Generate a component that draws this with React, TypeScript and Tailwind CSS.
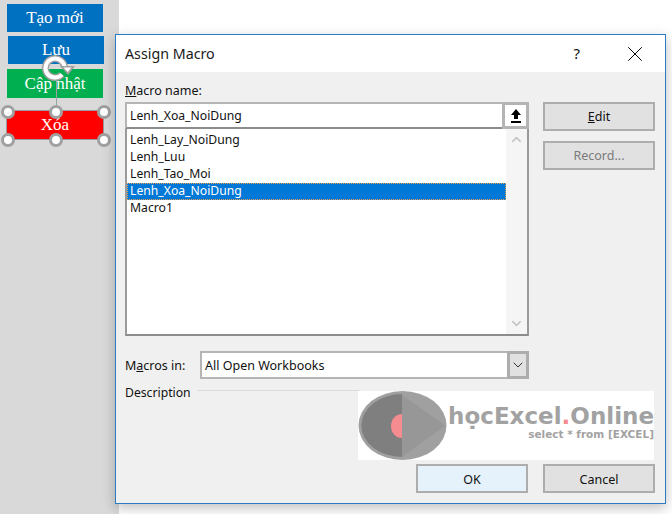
import React from "react";
import { ChevronDown, ChevronUp, X } from "lucide-react";

const macros = ["Lenh_Lay_NoiDung", "Lenh_Luu", "Lenh_Tao_Moi", "Lenh_Xoa_NoiDung", "Macro1"];
const handles = [
  "left-[-6px] top-[-6px]",
  "left-[42px] top-[-6px]",
  "left-[90px] top-[-6px]",
  "left-[-6px] top-[22px]",
  "left-[42px] top-[22px]",
  "left-[90px] top-[22px]",
];

function ShapeButton({ label, className }: { label: string; className: string }) {
  return (
    <div className={`flex h-[28px] w-[96px] items-center justify-center text-[17px] text-white font-['Liberation_Serif',serif] ${className}`}>
      {label}
    </div>
  );
}

function DialogButton({ children, className = "" }: { children: React.ReactNode; className?: string }) {
  return (
    <div className={`flex h-[29px] w-[112px] items-center justify-center border-2 border-[#adadad] bg-[#e1e1e1] pt-[2px] ${className}`}>
      {children}
    </div>
  );
}

function Logo() {
  return (
    <div className="ml-[233px] flex h-[69px] w-[296px] bg-white">
      <svg width="90" height="69" viewBox="0 0 90 69" className="shrink-0">
        <ellipse cx="44.5" cy="34.5" rx="44" ry="34.5" fill="#a0a0a0" />
        <path d="M44 3 A 40 31 0 0 0 44 66 Z" fill="#7f7f7f" />
        <path d="M44 4 L87 34.5 L44 66 Z" fill="#979797" />
        <path d="M44 23 A 11 12 0 0 0 44 47 Z" fill="#f58c90" />
      </svg>
      <div className="ml-[-2px] flex flex-1 flex-col items-end pt-[12px] font-['DejaVu_Sans',sans-serif] font-bold text-[#a2a2a2]">
        <div className="text-[23px] leading-[26px] whitespace-nowrap">
          họcExcel<span className="text-[#f58c90]">.</span>Online
        </div>
        <div className="mt-[-1px] text-[10.5px] leading-[13px] whitespace-nowrap">select * from [EXCEL]</div>
      </div>
    </div>
  );
}

export default function App() {
  return (
    <div className="relative flex h-[514px] w-[672px] overflow-hidden bg-white font-['Noto_Sans',sans-serif] text-[12.5px] text-[#111]">
      {/* sheet with shapes */}
      <div className="relative flex h-full w-[119px] flex-col bg-[#d9d9d9] pl-[7px] pt-[4px]">
        <ShapeButton label="Tạo mới" className="bg-[#0070c0]" />
        <ShapeButton label="Lưu" className="ml-[1px] mt-[4px] bg-[#0070c0]" />
        <ShapeButton label="Cập nhật" className="mt-[5px] h-[29px] bg-[#00b050]" />
        <div className="relative mt-[13px] flex h-[28px] w-[96px] items-center justify-center bg-[#ff0000] text-[17px] text-white font-['Liberation_Serif',serif] outline-1 outline-[#9a9a9a]">
          Xóa
          {handles.map((h) => (
            <span key={h} className={`absolute h-[14px] w-[14px] rounded-full border-[3px] border-[#a0a0a0] bg-white ${h}`} />
          ))}
          <span className="absolute left-[49px] top-[-30px] h-[25px] w-px bg-[#a0a0a0]" />
        </div>
        <svg className="absolute left-[38px] top-[55px]" width="40" height="26" viewBox="0 0 40 26">
          <path d="M24 19.5 A 9.5 9.5 0 1 1 26.5 13" fill="none" stroke="#a0a0a0" strokeWidth="7" />
          <path d="M24 19.5 A 9.5 9.5 0 1 1 26.5 13" fill="none" stroke="#fff" strokeWidth="4" />
          <path d="M22 11 L37 11 L30 20 Z" fill="#a0a0a0" />
          <path d="M25.5 12.5 L33.5 12.5 L29.7 17 Z" fill="#fff" />
        </svg>
      </div>

      {/* dialog */}
      <div className="absolute left-[115px] top-[34px] flex h-[470px] w-[551px] flex-col border border-[#2b7cc4] bg-[#f0f0f0] shadow-[0_4px_12px_rgba(0,0,0,0.25)]">
        <div className="flex h-[37px] shrink-0 items-center bg-white pl-[9px]">
          <span className="flex-1 text-[14.25px] text-[#1a1a1a]">Assign Macro</span>
          <span className="mr-[42px] text-[15px]">?</span>
          <X size={26} strokeWidth={0.9} className="mr-[17px] text-black" />
        </div>

        <div className="flex flex-1 flex-col pl-[9px]">
          <div className="flex">
            <div className="w-[404px]">
              <div className="mt-[9px] h-[20px] leading-[20px]"><u>M</u>acro name:</div>
              <div className="mt-[1px] flex h-[27px] items-stretch border-2 border-r-0 border-[#b5b5b5] border-b-[#8c8c8c] bg-white">
                <span className="flex-1 pl-[3px] text-[12.2px] leading-[23px]">Lenh_Xoa_NoiDung</span>
                <div className="-my-[2px] flex w-[27px] items-center justify-center border-[3px] border-[#b4b4b4] bg-white">
                  <svg width="18" height="18" viewBox="0 0 18 18">
                    <path d="M9 2 L14 8 L11 8 L11 12 L7 12 L7 8 L4 8 Z M4 14 H14 V16 H4 Z" fill="#000" />
                  </svg>
                </div>
              </div>
              <div className="flex h-[207px] border-2 border-t-0 border-[#8c8c8c] border-x-[#9a9a9a] bg-white">
                <div className="flex-1 pt-[3px]">
                  {macros.map((m) => (
                    <div
                      key={m}
                      className={`h-[17px] w-full pl-[3px] text-[12.2px] leading-[16px] ${m === "Lenh_Xoa_NoiDung" ? "bg-[#0078d7] text-white outline-1 outline-dotted outline-[#e8a050] -outline-offset-1" : ""}`}
                    >
                      {m}
                    </div>
                  ))}
                </div>
                <div className="flex w-[21px] flex-col items-center justify-between bg-[#f5f5f5] py-[3px] text-[#c4c4c4]">
                  <ChevronUp size={15} strokeWidth={2.5} />
                  <ChevronDown size={15} strokeWidth={2.5} />
                </div>
              </div>
            </div>
            <div className="ml-[14px] mt-[30px] flex flex-col gap-[10px]">
              <DialogButton><span><u>E</u>dit</span></DialogButton>
              <DialogButton><span className="text-[#7a7a7a]">Record...</span></DialogButton>
            </div>
          </div>

          <div className="mt-[15px] flex h-[28px] w-[404px] items-center">
            <span className="w-[75px] pt-[2px]">M<u>a</u>cros in:</span>
            <div className="flex h-full flex-1 items-stretch border-2 border-r-0 border-[#b5b5b5] bg-white">
              <span className="flex-1 pl-[3px] leading-[26px]">All Open Workbooks</span>
              <div className="-my-[2px] flex w-[22px] items-center justify-center border-[3px] border-[#adadad] bg-[#e1e1e1]">
                <ChevronDown size={16} strokeWidth={1.5} className="text-[#333]" />
              </div>
            </div>
          </div>

          <div className="mt-[4px] flex h-[18px] items-start">
            <span className="pt-[1px] text-[12.2px] leading-[18px]">Description</span>
            <span className="ml-[6px] mt-[7px] h-px w-[163px] bg-[#dcdcdc]" />
          </div>
          <div className="mt-[-10px]"><Logo /></div>

          <div className="mt-[4px] flex gap-[15px] pl-[291px]">
            <DialogButton className="border-[#0078d7] bg-[#e5f1fb] pt-[3px]">OK</DialogButton>
            <DialogButton className="pt-[3px]">Cancel</DialogButton>
          </div>
        </div>
      </div>
    </div>
  );
}
